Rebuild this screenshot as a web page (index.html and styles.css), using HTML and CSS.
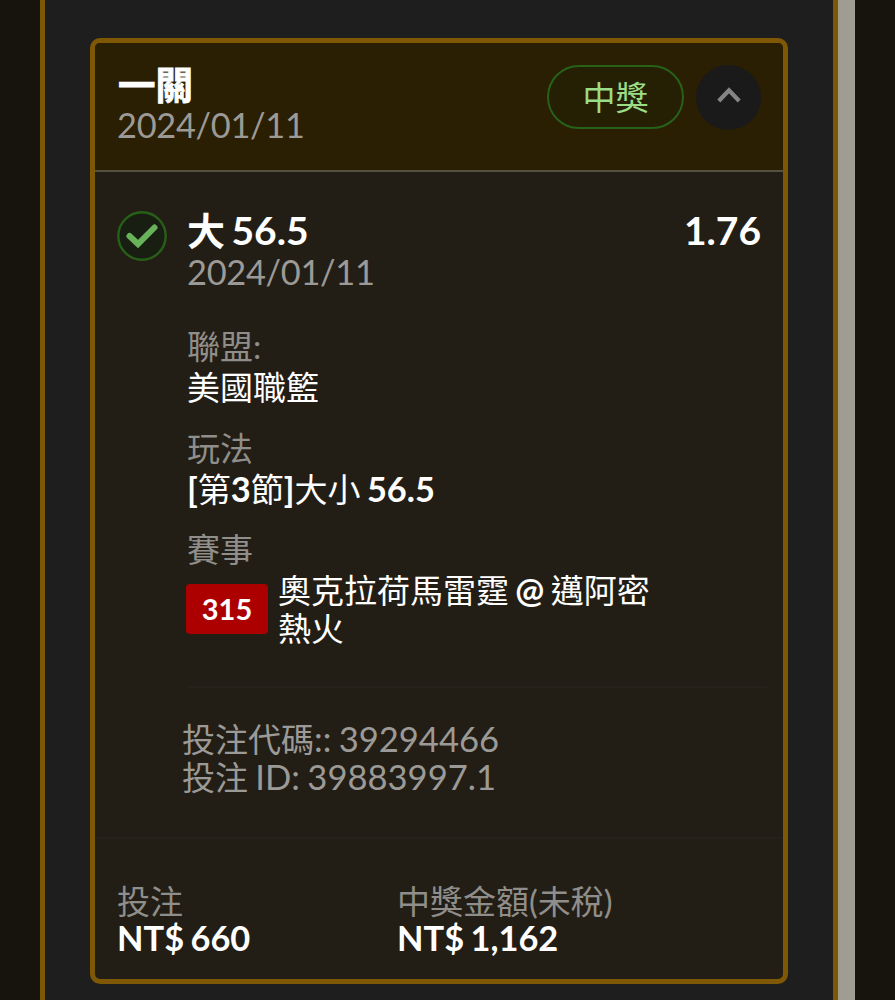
FILE: index.html
```html
<!DOCTYPE html>
<html lang="zh-Hant">
<head>
    <meta charset="UTF-8">
    <meta name="viewport" content="width=device-width, initial-scale=1.0">
    <title>投注紀錄</title>
    <link rel="stylesheet" href="styles.css">
</head>
<body>
    <div class="page">
        <main class="panel">
            <article class="ticket">
                <header class="ticket-header">
                    <div class="ticket-heading">
                        <h1 class="ticket-title">一關</h1>
                        <p class="date">2024/01/11</p>
                    </div>
                    <span class="status">中獎</span>
                    <button class="toggle" aria-label="收合">
                        <svg width="24" height="18" viewBox="0 0 24 18"><path d="M1.8 15 L12 4.2 L22.2 15" fill="none" stroke="#858585" stroke-width="4.2"/></svg>
                    </button>
                </header>

                <section class="bet">
                    <svg class="check" width="50" height="50" viewBox="0 0 50 50">
                        <circle cx="25" cy="25" r="23.7" fill="#191e12" stroke="#285f18" stroke-width="2.4"/>
                        <path d="M12.5 25 L21 33 L37.5 16.5" fill="none" stroke="#68b25a" stroke-width="6" stroke-linecap="round"/>
                    </svg>
                    <div class="bet-main">
                        <div class="bet-row">
                            <h2 class="bet-title"><span class="bet-pick">大</span> 56.5</h2>
                            <span class="odds">1.76</span>
                        </div>
                        <p class="date">2024/01/11</p>

                        <dl class="details">
                            <dt>聯盟:</dt>
                            <dd class="league"><span class="zh">美國職籃</span></dd>
                            <dt>玩法</dt>
                            <dd>[<span class="zh">第</span>3<span class="zh">節</span>]<span class="zh">大小</span> 56.5</dd>
                            <dt>賽事</dt>
                            <dd class="match">
                                <span class="match-no">315</span>
                                <span class="teams"><span class="zh">奧克拉荷馬雷霆</span> @ <span class="zh">邁阿密<br>熱火</span></span>
                            </dd>
                        </dl>

                        <div class="codes">
                            <p><span class="zh">投注代碼</span>:: 39294466</p>
                            <p><span class="zh">投注</span> ID: 39883997.1</p>
                        </div>
                    </div>
                </section>

                <footer class="totals">
                    <div class="total">
                        <p class="total-label">投注</p>
                        <p class="total-value">NT$ 660</p>
                    </div>
                    <div class="total">
                        <p class="total-label">中獎金額(未稅)</p>
                        <p class="total-value">NT$ 1,162</p>
                    </div>
                </footer>
            </article>
        </main>
        <div class="scrollbar"></div>
    </div>
</body>
</html>
```
FILE: styles.css
```css
* {
    box-sizing: border-box;
}
body {
    margin: 0;
    background-color: #17140d;
    color: #fff;
    font-family: Lato, "Noto Sans CJK TC", sans-serif;
    font-size: 34.4px;
    word-spacing: -2px;
    overflow: hidden;
}
h1, h2, p, dl, dd {
    margin: 0;
}
.page {
    display: flex;
    height: 1000px;
    padding: 0 40px;
}
.panel {
    flex: 1;
    padding: 38px 45px 0;
    border: solid #7f5805;
    border-width: 0 5px;
    background-color: #1e1e1e;
}
.scrollbar {
    width: 17px;
    background-color: #9f9c92;
}
.ticket {
    height: 946px;
    border: 5px solid #7f5805;
    border-radius: 10px;
    background-color: #221e16;
    overflow: hidden;
}
.zh {
    font-size: 33px;
    font-weight: 400;
}
.date {
    color: #9c9a96;
    letter-spacing: -0.3px;
    line-height: 40px;
}

/* Header */
.ticket-header {
    display: flex;
    height: 129px;
    padding: 22px 22px 0 22px;
    border-bottom: 2.5px solid #57503f;
    background-color: #2a1e03;
}
.ticket-heading {
    flex: 1;
}
.ticket-title {
    padding-left: 1px;
    font-size: 37.5px;
    font-weight: 700;
    line-height: 39px;
    height: 40px;
    -webkit-text-stroke: 0.8px #fff;
}
.status {
    width: 137px;
    height: 64px;
    border: 2.5px solid #286218;
    border-radius: 33px;
    background-color: #251f03;
    color: #9bdc87;
    font-size: 33px;
    line-height: 60px;
    text-align: center;
}
.toggle {
    display: flex;
    align-items: center;
    justify-content: center;
    width: 65px;
    height: 65px;
    margin-left: 12px;
    padding: 0 0 5px;
    border: 0;
    border-radius: 50%;
    background-color: #1a1a1a;
}

/* Bet */
.bet {
    display: flex;
    height: 667px;
    padding: 39px 22px 0;
    border-bottom: 2px solid #25221c;
}
.check {
    flex: none;
    margin-right: 20px;
}
.bet-main {
    flex: 1;
}
.bet-row {
    display: flex;
    justify-content: space-between;
    height: 41px;
    font-size: 39px;
    font-weight: 700;
    line-height: 39px;
}
.bet-title {
    font-size: 39px;
    word-spacing: -3px;
}
.bet-pick {
    font-size: 38px;
}
.details {
    height: 396px;
    margin-right: -6px;
    padding-top: 34px;
    border-bottom: 2px solid #25221c;
    font-weight: 700;
}
.details dt {
    color: #908e8a;
    font-size: 33px;
    font-weight: 400;
    line-height: 40px;
}
.details dd {
    height: 61px;
    line-height: 41px;
}
.details .league {
    height: 62px;
}
.details .match {
    display: flex;
    align-items: center;
    height: 80px;
}
.match-no {
    width: 82px;
    height: 50px;
    margin: 0 10px 1px -1px;
    border-radius: 4px;
    background-color: #ac0000;
    font-size: 29px;
    line-height: 49px;
    text-align: center;
}
.teams {
    line-height: 37px;
}
.codes {
    margin-left: -5px;
    padding-top: 32px;
    color: #9c9a96;
    font-size: 34.6px;
    line-height: 38px;
    word-spacing: -1.5px;
}

/* Totals */
.totals {
    display: flex;
    padding: 43px 22px 0;
}
.total {
    width: 280px;
}
.total-label {
    color: #908e8a;
    font-size: 33px;
    line-height: 38px;
}
.total-value {
    font-weight: 700;
    line-height: 36px;
}
```
